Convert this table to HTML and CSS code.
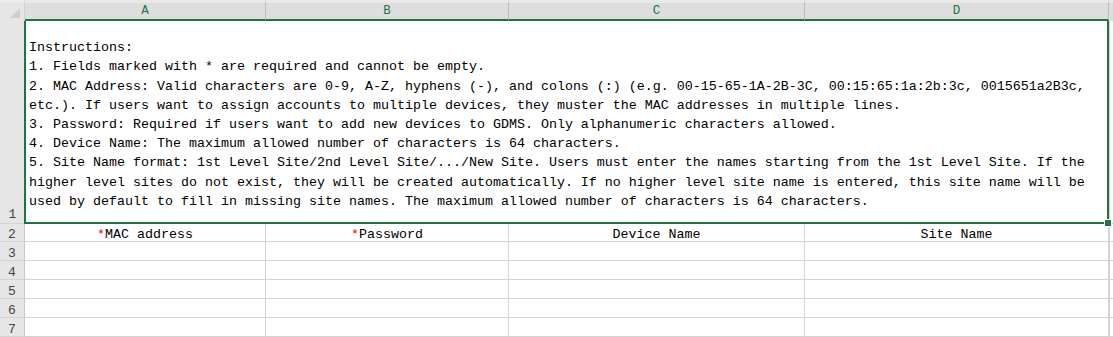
FILE: index.html
```html
<!DOCTYPE html>
<html>
<head>
<meta charset="utf-8">
<link rel="stylesheet" href="styles.css">
</head>
<body>
<div class="sheet">
  <div class="corner"><span class="tri"></span></div>
  <div class="colhead sel">A</div>
  <div class="colhead sel">B</div>
  <div class="colhead sel">C</div>
  <div class="colhead sel">D</div>
  <div class="colhead end"></div>

  <div class="rowhead r1">1</div>
  <div class="merged">
    <div class="line">Instructions:</div>
    <div class="line">1. Fields marked with * are required and cannot be empty.</div>
    <div class="line">2. MAC Address: Valid characters are 0-9, A-Z, hyphens (-), and colons (:) (e.g. 00-15-65-1A-2B-3C, 00:15:65:1a:2b:3c, 0015651a2B3c,</div>
    <div class="line">etc.). If users want to assign accounts to multiple devices, they muster the MAC addresses in multiple lines.</div>
    <div class="line">3. Password: Required if users want to add new devices to GDMS. Only alphanumeric characters allowed.</div>
    <div class="line">4. Device Name: The maximum allowed number of characters is 64 characters.</div>
    <div class="line">5. Site Name format: 1st Level Site/2nd Level Site/.../New Site. Users must enter the names starting from the 1st Level Site. If the</div>
    <div class="line">higher level sites do not exist, they will be created automatically. If no higher level site name is entered, this site name will be</div>
    <div class="line">used by default to fill in missing site names. The maximum allowed number of characters is 64 characters.</div>
    <span class="handle"></span>
  </div>
  <div class="cell end"></div>

  <div class="rowhead">2</div>
  <div class="cell head"><span class="req">*</span>MAC address</div>
  <div class="cell head"><span class="req">*</span>Password</div>
  <div class="cell head">Device Name</div>
  <div class="cell head">Site Name</div>
  <div class="cell end"></div>

  <div class="rowhead">3</div><div class="cell"></div><div class="cell"></div><div class="cell"></div><div class="cell"></div><div class="cell end"></div>
  <div class="rowhead">4</div><div class="cell"></div><div class="cell"></div><div class="cell"></div><div class="cell"></div><div class="cell end"></div>
  <div class="rowhead">5</div><div class="cell"></div><div class="cell"></div><div class="cell"></div><div class="cell"></div><div class="cell end"></div>
  <div class="rowhead">6</div><div class="cell"></div><div class="cell"></div><div class="cell"></div><div class="cell"></div><div class="cell end"></div>
  <div class="rowhead">7</div><div class="cell"></div><div class="cell"></div><div class="cell"></div><div class="cell"></div><div class="cell end"></div>
</div>
</body>
</html>
```
FILE: styles.css
```css
html, body {
  margin: 0;
  padding: 0;
  background: #ffffff;
  overflow: hidden;
}
body {
  font-family: "Liberation Mono", "DejaVu Sans Mono", monospace;
  font-size: 13.33px;
  color: #000;
}
.sheet {
  display: grid;
  grid-template-columns: 25px 241px 243px 296px 304px 1fr;
  grid-template-rows: 21px 203px 18px repeat(5, 19px);
  width: 1113px;
}
.corner {
  background: #e6e6e6;
  border-top: 3px solid #ececec;
  border-right: 1px solid #d0d0d0;
  box-sizing: border-box;
  position: relative;
}
.tri {
  position: absolute;
  right: 4px;
  bottom: 3px;
  width: 0;
  height: 0;
  border-left: 10px solid transparent;
  border-bottom: 10px solid #cfcfcf;
}
.colhead {
  background: #dedede;
  border-top: 3px solid #e9e9e9;
  border-right: 1px solid #bcbcbc;
  box-sizing: border-box;
  display: flex;
  align-items: center;
  justify-content: center;
  font-size: 12.5px;
  color: #444;
  padding-bottom: 1px;
}
.colhead.sel {
  color: #217346;
  border-bottom: 2px solid #217346;
}
.colhead.end {
  border-right: none;
}
.rowhead {
  background: #e6e6e6;
  border-bottom: 1px solid #d4d4d4;
  border-right: 1px solid #c8c8c8;
  box-sizing: border-box;
  display: flex;
  align-items: center;
  justify-content: center;
  color: #444;
  font-size: 13px;
  padding-top: 4px;
}
.rowhead.r1 {
  align-items: flex-end;
  padding-bottom: 1px;
  padding-top: 0;
  border-right: none;
}
.merged {
  grid-column: 2 / 6;
  border-left: 2px solid #217346;
  border-right: 2px solid #217346;
  border-bottom: 2px solid #217346;
  box-sizing: border-box;
  padding: 0 0 11px 3px;
  display: flex;
  flex-direction: column;
  justify-content: flex-end;
  line-height: 19.2px;
  position: relative;
  margin-left: -1px;
}
.line {
  white-space: nowrap;
}
.handle {
  position: absolute;
  right: -5px;
  bottom: -5px;
  width: 6px;
  height: 6px;
  background: #217346;
  border: 1px solid #fff;
}
.cell {
  border-right: 1px solid #d4d4d4;
  border-bottom: 1px solid #d4d4d4;
  box-sizing: border-box;
}
.cell.end {
  border-right: none;
  border-left: 1px solid #d4d4d4;
}
.cell.head {
  display: flex;
  align-items: center;
  justify-content: center;
  padding-top: 4px;
}
.req {
  color: #e00000;
}
```
